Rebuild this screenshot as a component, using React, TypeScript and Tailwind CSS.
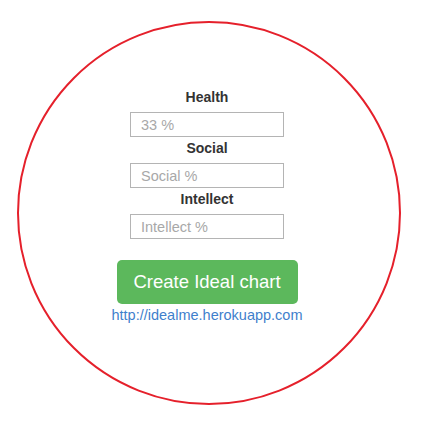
import React from "react";

// Campo com rótulo centrado por cima
const Field = ({ label, placeholder }: { label: string; placeholder: string }) => (
  <>
    <label className="mt-[2px] mb-[6px] text-[14px] leading-[18px] font-bold text-[#333]">{label}</label>
    <input
      type="text"
      placeholder={placeholder}
      className="w-[154px] h-[25px] border border-[#b4b4b4] bg-white px-[10px] text-[14.5px] text-[#555] placeholder:text-[#a8a8a8] outline-none"
    />
  </>
);

export default function App() {
  return (
    <div className="w-[425px] h-[425px] bg-white pt-[21px] pl-[17px]" style={{ fontFamily: '"Liberation Sans", Arial, sans-serif' }}>
      <div className="w-[384px] h-[384px] rounded-full border-2 border-[#e5202b] flex flex-col items-center pt-[63px] pr-[4px]">
        <Field label="Health" placeholder="33 %" />
        <Field label="Social" placeholder="Social %" />
        <Field label="Intellect" placeholder="Intellect %" />
        <button className="mt-[21px] w-[181px] h-[44px] rounded-[5px] bg-[#5cb85c] text-white text-[18.5px] leading-none">
          Create Ideal chart
        </button>
        <a href="#" className="mt-[2px] text-[14.5px] leading-[18px] text-[#3f7fcc]">
          http://idealme.herokuapp.com
        </a>
      </div>
    </div>
  );
}
